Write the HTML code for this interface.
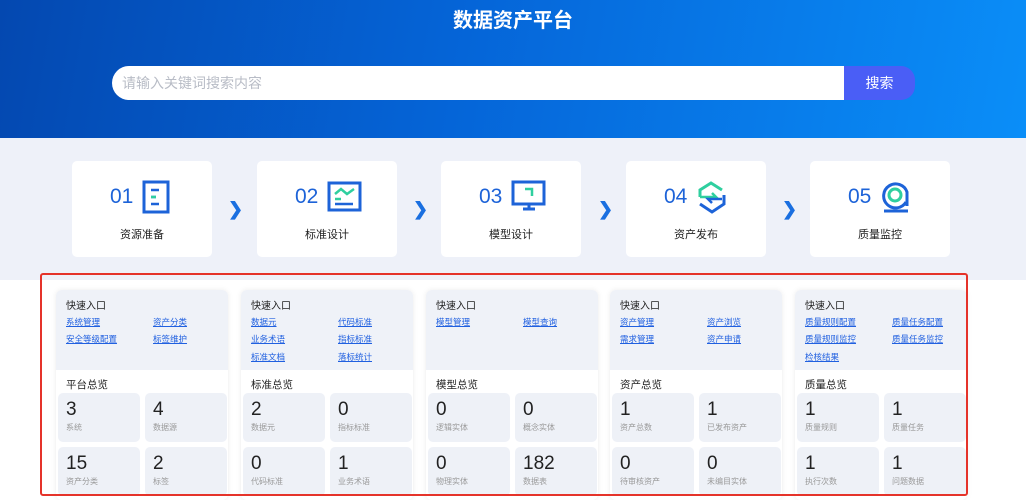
<!DOCTYPE html>
<html><head><meta charset="utf-8"><style>
*{margin:0;padding:0;box-sizing:border-box}
body{width:1026px;height:500px;overflow:hidden;font-family:"Liberation Sans","Noto Sans CJK SC",sans-serif;background:#fff;position:relative}
.hd{position:absolute;left:0;top:0;width:1026px;height:138px;background:linear-gradient(100deg,#0448b0 0%,#0565d8 45%,#0a8ef8 100%)}
.title{position:absolute;top:4px;left:0;width:1026px;text-align:center;color:#fff;font-size:20px;font-weight:bold}
.search{position:absolute;left:112px;top:66px;width:732px;height:34px;background:#fff;border-radius:17px 0 0 17px;color:#b8bcc6;font-size:14px;line-height:34px;padding-left:10px}
.btn{position:absolute;left:844px;top:66px;width:71px;height:34px;background:#4a5ef6;border-radius:0 14px 14px 0;color:#fff;font-size:14px;line-height:34px;text-align:center}
.band{position:absolute;left:0;top:138px;width:1026px;height:142px;background:#eef1f9}
.step{position:absolute;top:161px;width:140px;height:96px;background:#fff;border-radius:5px}
.step .n{position:absolute;top:24px;left:38px;font-size:21px;color:#1d63d8}
.step svg{position:absolute;top:19px;left:70px}
.step .t{position:absolute;top:65px;width:100%;text-align:center;font-size:11px;color:#222}
.arr{position:absolute;top:199px;color:#1a6fe0;font-size:18px;font-weight:bold}
.red{position:absolute;left:40px;top:273px;width:928px;height:223px;border:2px solid #e5332a;border-radius:3px}
.col{position:absolute;top:290px;width:172px;height:210px;border-radius:6px;box-shadow:0 0 6px rgba(0,0,0,.08);background:#fff;overflow:hidden}
.qa{height:80px;background:#eff2f8;padding:11px 10px}
.qa h4{font-size:10px;font-weight:normal;color:#222;line-height:12px}
.lk{position:relative;height:56px}
.lk a{position:absolute;font-size:8.5px;color:#2060e0;text-decoration:underline;line-height:10px;white-space:nowrap}
.ov{font-size:10.5px;color:#222;padding:7px 10px 0;height:24px}
.st{position:absolute;width:82px;height:49px;background:#eef1f7;border-radius:5px;padding:6px 8px}
.st b{display:block;font-weight:normal;font-size:19px;color:#222;line-height:22px}
.st i{display:block;font-style:normal;font-size:8px;color:#999;margin-top:1px}
</style></head><body>
<div class="hd"><div class="title">数据资产平台</div>
<div class="search">请输入关键词搜索内容</div><div class="btn">搜索</div></div>
<div class="band"></div>

<div class="step" style="left:72px"><div class="n">01</div>
<svg width="30" height="34" viewBox="0 0 30 34"><rect x="2" y="2" width="24" height="30" fill="none" stroke="#1d63d8" stroke-width="3"/><path d="M9 10h8M9 17h5M9 24h8" stroke="#1d63d8" stroke-width="2.5"/><path d="M9 17h5" stroke="#2fcf9f" stroke-width="2.5"/></svg>
<div class="t">资源准备</div></div>
<div class="arr" style="left:228px">&#x276F;</div>

<div class="step" style="left:257px"><div class="n">02</div>
<svg width="36" height="34" viewBox="0 0 36 34"><rect x="2" y="3" width="31" height="27" fill="none" stroke="#1d63d8" stroke-width="3"/><path d="M8 14l6-5 6 5 7-5" fill="none" stroke="#2fcf9f" stroke-width="2.5"/><path d="M8 19h6" stroke="#2fcf9f" stroke-width="2.5"/><path d="M8 24h18" stroke="#1d63d8" stroke-width="2.5"/></svg>
<div class="t">标准设计</div></div>
<div class="arr" style="left:413px">&#x276F;</div>

<div class="step" style="left:441px"><div class="n">03</div>
<svg width="36" height="34" viewBox="0 0 36 34"><rect x="2" y="2" width="31" height="22" fill="none" stroke="#1d63d8" stroke-width="3"/><path d="M12 29h12M18 24v5" stroke="#1d63d8" stroke-width="3"/><path d="M14 9h7v7" fill="none" stroke="#2fcf9f" stroke-width="2.5"/></svg>
<div class="t">模型设计</div></div>
<div class="arr" style="left:598px">&#x276F;</div>

<div class="step" style="left:626px"><div class="n">04</div>
<svg width="32" height="34" viewBox="0 0 32 34"><path d="M4 17V10l11-7 11 7" fill="none" stroke="#2fcf9f" stroke-width="3"/><path d="M4 17h16l-4-4" fill="none" stroke="#2fcf9f" stroke-width="2.5"/><path d="M28 15v9l-12 8-12-8" fill="none" stroke="#1d63d8" stroke-width="3"/><path d="M26 19H12l4 4" fill="none" stroke="#1d63d8" stroke-width="2.5"/></svg>
<div class="t">资产发布</div></div>
<div class="arr" style="left:782px">&#x276F;</div>

<div class="step" style="left:810px"><div class="n">05</div>
<svg width="32" height="34" viewBox="0 0 32 34"><path d="M26 22A12 12 0 1 1 27 12v14" fill="none" stroke="#1d63d8" stroke-width="3"/><circle cx="15" cy="15" r="6" fill="none" stroke="#2fcf9f" stroke-width="3"/><path d="M4 31h24" stroke="#1d63d8" stroke-width="3"/></svg>
<div class="t">质量监控</div></div>

<div class="col" style="left:56px"><div class="qa"><h4>快速入口</h4><div class="lk">
<a style="left:0;top:4px">系统管理</a><a style="left:87px;top:4px">资产分类</a>
<a style="left:0;top:21px">安全等级配置</a><a style="left:87px;top:21px">标签维护</a></div></div>
<div class="ov">平台总览</div>
<div class="st" style="left:2px;top:103px"><b>3</b><i>系统</i></div><div class="st" style="left:89px;top:103px"><b>4</b><i>数据源</i></div>
<div class="st" style="left:2px;top:157px"><b>15</b><i>资产分类</i></div><div class="st" style="left:89px;top:157px"><b>2</b><i>标签</i></div></div>

<div class="col" style="left:241px"><div class="qa"><h4>快速入口</h4><div class="lk">
<a style="left:0;top:4px">数据元</a><a style="left:87px;top:4px">代码标准</a>
<a style="left:0;top:21px">业务术语</a><a style="left:87px;top:21px">指标标准</a>
<a style="left:0;top:39px">标准文档</a><a style="left:87px;top:39px">落标统计</a></div></div>
<div class="ov">标准总览</div>
<div class="st" style="left:2px;top:103px"><b>2</b><i>数据元</i></div><div class="st" style="left:89px;top:103px"><b>0</b><i>指标标准</i></div>
<div class="st" style="left:2px;top:157px"><b>0</b><i>代码标准</i></div><div class="st" style="left:89px;top:157px"><b>1</b><i>业务术语</i></div></div>

<div class="col" style="left:426px"><div class="qa"><h4>快速入口</h4><div class="lk">
<a style="left:0;top:4px">模型管理</a><a style="left:87px;top:4px">模型查询</a></div></div>
<div class="ov">模型总览</div>
<div class="st" style="left:2px;top:103px"><b>0</b><i>逻辑实体</i></div><div class="st" style="left:89px;top:103px"><b>0</b><i>概念实体</i></div>
<div class="st" style="left:2px;top:157px"><b>0</b><i>物理实体</i></div><div class="st" style="left:89px;top:157px"><b>182</b><i>数据表</i></div></div>

<div class="col" style="left:610px"><div class="qa"><h4>快速入口</h4><div class="lk">
<a style="left:0;top:4px">资产管理</a><a style="left:87px;top:4px">资产浏览</a>
<a style="left:0;top:21px">需求管理</a><a style="left:87px;top:21px">资产申请</a></div></div>
<div class="ov">资产总览</div>
<div class="st" style="left:2px;top:103px"><b>1</b><i>资产总数</i></div><div class="st" style="left:89px;top:103px"><b>1</b><i>已发布资产</i></div>
<div class="st" style="left:2px;top:157px"><b>0</b><i>待审核资产</i></div><div class="st" style="left:89px;top:157px"><b>0</b><i>未编目实体</i></div></div>

<div class="col" style="left:795px"><div class="qa"><h4>快速入口</h4><div class="lk">
<a style="left:0;top:4px">质量规则配置</a><a style="left:87px;top:4px">质量任务配置</a>
<a style="left:0;top:21px">质量规则监控</a><a style="left:87px;top:21px">质量任务监控</a>
<a style="left:0;top:39px">检核结果</a></div></div>
<div class="ov">质量总览</div>
<div class="st" style="left:2px;top:103px"><b>1</b><i>质量规则</i></div><div class="st" style="left:89px;top:103px"><b>1</b><i>质量任务</i></div>
<div class="st" style="left:2px;top:157px"><b>1</b><i>执行次数</i></div><div class="st" style="left:89px;top:157px"><b>1</b><i>问题数据</i></div></div>

<div class="red"></div>
</body></html>
